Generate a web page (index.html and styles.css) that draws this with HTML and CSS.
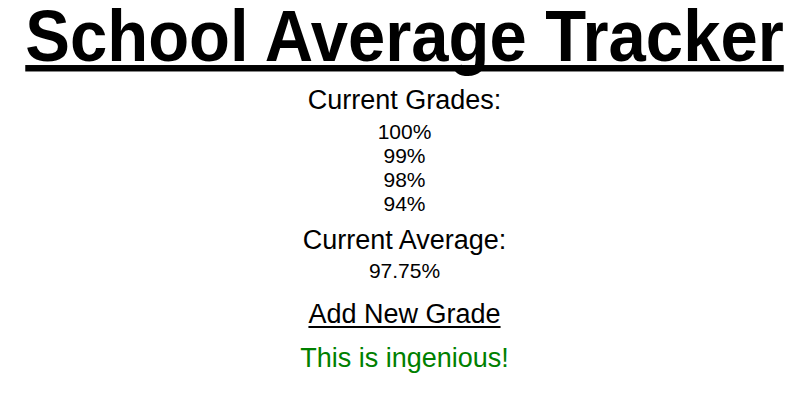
FILE: index.html
```html
<!DOCTYPE html>
<html>
<head>
<meta charset="utf-8">
<link rel="stylesheet" href="styles.css">
</head>
<body>
<main class="page">
  <h1 class="title">School Average Tracker</h1>
  <h2 class="label label-grades">Current Grades:</h2>
  <ul class="grades">
    <li>100%</li>
    <li>99%</li>
    <li>98%</li>
    <li>94%</li>
  </ul>
  <h2 class="label label-average">Current Average:</h2>
  <p class="average">97.75%</p>
  <a class="add" href="#">Add New Grade</a>
  <p class="message">This is ingenious!</p>
</main>
</body>
</html>
```

FILE: styles.css
```css
html, body {
  margin: 0;
  padding: 0;
  background: #fff;
}
.page {
  display: flex;
  flex-direction: column;
  align-items: center;
  font-family: "Liberation Sans", Arial, sans-serif;
  color: #000;
}
.title {
  font-family: "Liberation Sans", Arial, sans-serif;
  font-weight: bold;
  font-size: 67px;
  text-decoration: underline;
  text-decoration-thickness: 5.6px;
  text-underline-offset: 3.7px;
  text-decoration-skip-ink: none;
  white-space: nowrap;
  margin: 3px 0 0;
  line-height: 66px;
  transform: scaleY(1.075);
  transform-origin: 50% 50%;
}
.label {
  font-weight: normal;
  font-size: 27px;
  line-height: 28px;
}
.label-grades {
  margin: 17px 0 0;
}
.label-average {
  margin: 10px 0 0;
}
.grades {
  list-style: none;
  margin: 6px 0 0;
  padding: 0;
  text-align: center;
  font-size: 21px;
  line-height: 24px;
}
.average {
  margin: 5px 0 0;
  font-size: 21px;
  line-height: 24px;
}
.add {
  color: #000;
  font-size: 27px;
  margin-top: 16px;
  line-height: 30px;
  text-underline-offset: 3px;
}
.message {
  color: #008000;
  font-size: 27px;
  margin: 14px 0 0;
  line-height: 30px;
}
```
